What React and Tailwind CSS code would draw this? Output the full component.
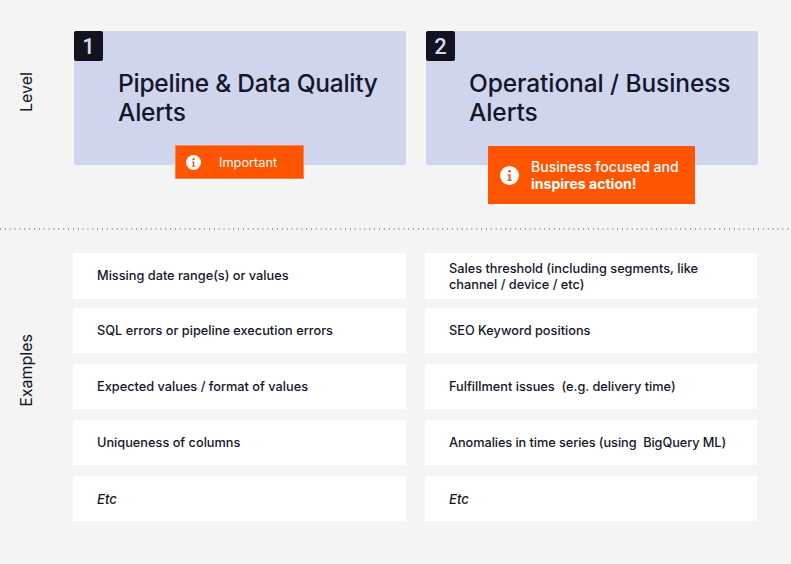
const font = { fontFamily: '"Inter", "Noto Sans", sans-serif' };

function Info({ size }) {
  return (
    <svg width={size} height={size} viewBox="0 0 20 20" className="shrink-0">
      <circle cx="10" cy="10" r="10" fill="#fff" />
      <circle cx="10" cy="5.6" r="1.5" fill="#ff5500" />
      <path d="M7.9 8.6h3.1v5.6h1.2v1.5H7.9v-1.5h1.2v-4.1H7.9z" fill="#ff5500" />
    </svg>
  );
}

function LevelCard({ n, title, badge, className, titleClass }) {
  return (
    <div className={`relative h-[134px] rounded-[2px] bg-[#d0d5ee] ${className}`}>
      <div className="absolute left-0 top-0 flex h-[30px] w-[29px] items-center justify-center rounded-[2px] bg-[#12131f] font-['Roboto'] text-[22px] font-medium text-[#d6daf0]">
        {n}
      </div>
      <h2 className={`pt-[38px] text-[24.5px] font-[450] leading-[29px] text-[#14162a] ${titleClass}`}>
        {title}
      </h2>
      {badge}
    </div>
  );
}

function Row({ children, italic, tall, spanClass = "" }) {
  return (
    <div className={`flex items-center self-start whitespace-pre-wrap bg-white pl-[24px] pr-[20px] text-[12.75px] leading-[16px] text-[#14162a] ${tall ? "h-[46px]" : "h-[45px]"} ${italic ? "text-[13.2px] font-medium italic" : "font-[450]"}`}>
      <span className={spanClass}>{children}</span>
    </div>
  );
}

function SideLabel({ children, className }) {
  return (
    <div className={`flex w-[73px] shrink-0 items-start pl-[18px] ${className}`}>
      <span className="rotate-180 text-[16px] leading-[17px] text-[#14162a] [writing-mode:vertical-rl]">
        {children}
      </span>
    </div>
  );
}

export default function App() {
  const left = [
    "Missing date range(s) or values",
    "SQL errors or pipeline execution errors",
    "Expected values / format of values",
    "Uniqueness of columns",
  ];
  const right = [
    "Sales threshold (including segments, like channel / device / etc)",
    "SEO Keyword positions",
    "Fulfillment issues  (e.g. delivery time)",
    "Anomalies in time series (using  BigQuery ML)",
  ];
  return (
    <div style={font} className="h-[564px] w-[791px] overflow-hidden bg-[#f4f4f4] pt-[31px]">
      <div className="flex h-[197px]">
        <SideLabel className="pt-[41px]">Level</SideLabel>
        <LevelCard
          n="1"
          className="ml-[1px] w-[332px]"
          titleClass="pl-[44px] tracking-[-0.24px]"
          title={<>Pipeline &amp; Data Quality<br />Alerts</>}
          badge={
            <div className="absolute left-[101px] top-[114px] flex h-[34px] w-[129px] items-center border border-[#ff8250] bg-[#ff5500] pl-[10px] pt-[1px] text-[12.75px] font-normal text-white">
              <Info size={15} />
              <span className="ml-[18px]">Important</span>
            </div>
          }
        />
        <LevelCard
          n="2"
          className="ml-[20px] w-[332px]"
          titleClass="pl-[43px] tracking-[-0.1px]"
          title={<>Operational / Business<br />Alerts</>}
          badge={
            <div className="absolute left-[62px] top-[115px] flex h-[58px] w-[207px] items-center bg-[#ff5500] pl-[12px] text-[14.05px] font-[450] leading-[17.5px] text-white">
              <Info size={19} />
              <span className="ml-[12px]">Business focused and<br /><b className="font-bold">inspires action!</b></span>
            </div>
          }
        />
      </div>
      <div className="h-[2px] bg-[linear-gradient(90deg,#9a9a9a_0_1.4px,transparent_1.4px)] bg-[length:4.87px_2px]" />
      <div className="mt-[23px] flex">
        <SideLabel className="pt-[81px]">Examples</SideLabel>
        <div className="grid w-[684px] grid-cols-[333px_332px] grid-rows-[55px_56px_56px_56px_45px] gap-x-[19px]">
          {left.map((t, i) => [
            <Row key={"l" + i} tall={i === 0}>{t}</Row>,
            <Row key={"r" + i} tall={i === 0} spanClass={i === 0 ? "pt-[1px]" : i === 3 ? "tracking-[-0.07px]" : ""}>{right[i]}</Row>,
          ])}
          <Row italic>Etc</Row>
          <Row italic>Etc</Row>
        </div>
      </div>
    </div>
  );
}
